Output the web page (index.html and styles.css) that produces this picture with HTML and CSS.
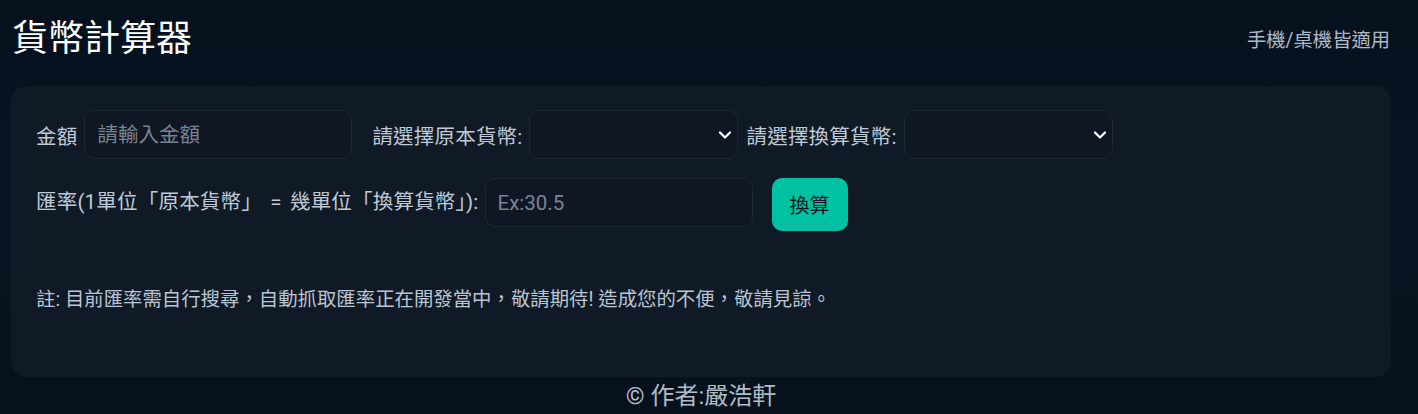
FILE: index.html
```html
<!DOCTYPE html>
<html lang="zh-Hant">
<head>
<meta charset="utf-8">
<title>貨幣計算器</title>
<link rel="stylesheet" href="styles.css">
</head>
<body>
<div class="page">
  <header class="top">
    <h1 class="title">貨幣計算器</h1>
    <span class="hint">手機/桌機皆適用</span>
  </header>
  <main class="card">
    <div class="row">
      <label class="lbl">金額</label>
      <input class="field amount" type="text" placeholder="請輸入金額">
      <label class="lbl">請選擇原本貨幣:</label>
      <select class="field sel"><option></option></select>
      <label class="lbl">請選擇換算貨幣:</label>
      <select class="field sel"><option></option></select>
    </div>
    <div class="row row2">
      <label class="lbl rate-lbl">匯率(1單位「原本貨幣」 = 幾單位「換算貨幣」):</label>
      <input class="field rate" type="text" placeholder="Ex:30.5">
      <button class="btn">換算</button>
    </div>
    <p class="note">註: 目前匯率需自行搜尋，自動抓取匯率正在開發當中，敬請期待! 造成您的不便，敬請見諒。</p>
  </main>
  <footer class="foot">© 作者:嚴浩軒</footer>
</div>
</body>
</html>
```
FILE: styles.css
```css
html, body {
  margin: 0;
  padding: 0;
}
body {
  background: linear-gradient(180deg, #06111e 0%, #081422 50%, #07111c 100%);
  min-height: 414px;
  font-family: Roboto, "Noto Sans CJK TC", sans-serif;
  color: #c0cbd6;
  overflow: hidden;
}
.page {
  width: 1418px;
}
.top {
  height: 78px;
  display: flex;
  align-items: center;
  justify-content: space-between;
  padding: 0 28px 0 12px;
  box-sizing: border-box;
  margin-bottom: 8px;
}
.title {
  margin: 0;
  font-size: 36px;
  font-weight: 400;
  color: #ffffff;
  line-height: 1;
}
.hint {
  font-size: 19.3px;
  color: #aebac6;
}
.card {
  margin-left: 11px;
  width: 1380px;
  height: 291px;
  box-sizing: border-box;
  background: #101a27;
  border-radius: 16px;
  padding: 24px 25px;
}
.row {
  display: flex;
  align-items: center;
}
.row2 {
  margin-top: 19px;
  align-items: flex-start;
}
.row2 .lbl {
  line-height: 49px;
}
.lbl {
  font-size: 20.5px;
  letter-spacing: 0.2px;
  color: #bfcad6;
  white-space: nowrap;
}
.rate-lbl {
  letter-spacing: 0.2px;
  word-spacing: 3px;
}
.field {
  height: 49px;
  box-sizing: border-box;
  background: #0f1624;
  border: 1px solid #1e2735;
  border-radius: 10px;
  color: #dfe6ee;
  font-family: Roboto, "Noto Sans CJK TC", sans-serif;
  font-size: 20.5px;
  padding: 0 12px;
  outline: none;
}
.field::placeholder {
  color: #7b8491;
}
.amount {
  width: 268px;
  margin: 0 20px 0 7px;
}
.sel {
  width: 209px;
  margin: 0 8px 0 7px;
  appearance: none;
  -webkit-appearance: none;
  background-image: url("data:image/svg+xml;utf8,<svg xmlns='http://www.w3.org/2000/svg' width='14' height='10' viewBox='0 0 14 10'><path d='M2 2.5 L7 7.5 L12 2.5' fill='none' stroke='white' stroke-width='2.2' stroke-linecap='round' stroke-linejoin='round'/></svg>");
  background-repeat: no-repeat;
  background-position: right 5px center;
  background-size: 14px 10px;
}
.rate {
  width: 268px;
  margin: 0 19px 0 6px;
}
.btn {
  width: 76px;
  height: 53px;
  border: none;
  border-radius: 10px;
  background: #00c1a2;
  color: #0c1822;
  font-family: Roboto, "Noto Sans CJK TC", sans-serif;
  font-size: 20px;
  cursor: pointer;
}
.note {
  margin: 56px 0 0 0;
  font-size: 19.4px;
  color: #b9c5d1;
  line-height: 26px;
}
.foot {
  width: 1380px;
  margin-left: 11px;
  text-align: center;
  font-size: 24px;
  color: #b0bcc8;
  line-height: 38px;
}
```
